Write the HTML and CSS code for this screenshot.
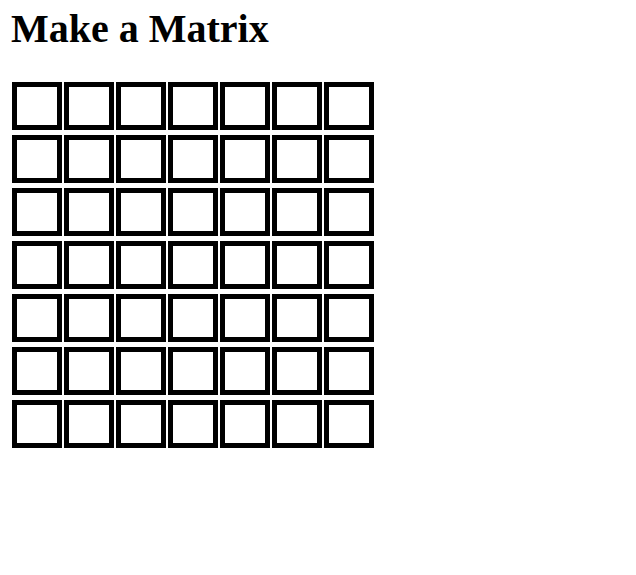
FILE: index.html
```html
<!DOCTYPE html>
<html>
<head>
<meta charset="utf-8">
<title>Make a Matrix</title>
<link rel="stylesheet" href="styles.css">
</head>
<body>
<div class="page">
  <h1 class="title">Make a Matrix</h1>
  <div class="matrix">
    <div class="cell"></div><div class="cell"></div><div class="cell"></div><div class="cell"></div><div class="cell"></div><div class="cell"></div><div class="cell"></div>
    <div class="cell"></div><div class="cell"></div><div class="cell"></div><div class="cell"></div><div class="cell"></div><div class="cell"></div><div class="cell"></div>
    <div class="cell"></div><div class="cell"></div><div class="cell"></div><div class="cell"></div><div class="cell"></div><div class="cell"></div><div class="cell"></div>
    <div class="cell"></div><div class="cell"></div><div class="cell"></div><div class="cell"></div><div class="cell"></div><div class="cell"></div><div class="cell"></div>
    <div class="cell"></div><div class="cell"></div><div class="cell"></div><div class="cell"></div><div class="cell"></div><div class="cell"></div><div class="cell"></div>
    <div class="cell"></div><div class="cell"></div><div class="cell"></div><div class="cell"></div><div class="cell"></div><div class="cell"></div><div class="cell"></div>
    <div class="cell"></div><div class="cell"></div><div class="cell"></div><div class="cell"></div><div class="cell"></div><div class="cell"></div><div class="cell"></div>
  </div>
</div>
</body>
</html>
```

FILE: styles.css
```css
html, body {
  margin: 0;
  padding: 0;
  background: #ffffff;
}

.page {
  padding: 6px 0 0 12px;
  font-family: "Liberation Serif", "Times New Roman", serif;
  color: #000000;
}

.title {
  margin: 0 0 30px -1px;
  font-size: 40px;
  line-height: 46px;
  font-weight: bold;
}

.matrix {
  display: grid;
  grid-template-columns: repeat(7, 50px);
  grid-auto-rows: 48px;
  column-gap: 2px;
  row-gap: 5px;
}

.cell {
  box-sizing: border-box;
  border: 5px solid #000000;
  background: #ffffff;
}
```
